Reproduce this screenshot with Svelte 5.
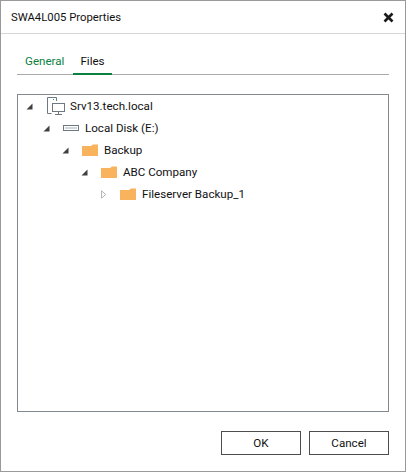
<script>
	const nodes = [
		{ label: 'Srv13.tech.local', depth: 0, icon: 'server', arrow: 'open' },
		{ label: 'Local Disk (E:)', depth: 1, icon: 'disk', arrow: 'open' },
		{ label: 'Backup', depth: 2, icon: 'folder', arrow: 'open' },
		{ label: 'ABC Company', depth: 3, icon: 'folder', arrow: 'open' },
		{ label: 'Fileserver Backup_1', depth: 4, icon: 'folder', arrow: 'closed' }
	];
</script>

<div class="window">
	<header>
		<span class="title">SWA4L005 Properties</span>
		<svg class="close" width="11" height="11" viewBox="0 0 11 11">
			<path d="M1.5 1.5 L9.5 9.5 M9.5 1.5 L1.5 9.5" stroke="#1a1a1a" stroke-width="2.6" />
		</svg>
	</header>

	<main>
		<nav>
			<span class="tab">General</span>
			<span class="tab active">Files</span>
		</nav>

		<div class="tree">
			{#each nodes as node}
				<div class="row" style="padding-left: {node.depth ? node.depth * 19 + 6 : 8}px">
					{#if node.arrow === 'open'}
						<svg class="arrow" width="7" height="7" viewBox="0 0 7 7">
							<path d="M6.5 0.5 V6.5 H0.5 Z" fill="#404040" />
						</svg>
					{:else}
						<svg class="arrow" width="7" height="9" viewBox="0 0 7 9">
							<path d="M1.5 0.8 L5.8 4.5 L1.5 8.2 Z" fill="#fff" stroke="#b5b5b5" />
						</svg>
					{/if}

					{#if node.icon === 'server'}
						<svg class="icon server" width="19" height="20" viewBox="0 0 19 20" fill="none">
							<path d="M10.5 1.5 H1.5 V17.5 H5.5" stroke="#6d7880" />
							<path d="M10.5 1.5 V5" stroke="#6d7880" />
							<rect x="7" y="3" width="1" height="1" fill="#1f9d6b" />
							<rect x="6.5" y="7.5" width="12" height="8" fill="#fff" stroke="#6d7880" />
							<path d="M12.5 16 V18 M9 18.5 H16" stroke="#6d7880" />
						</svg>
					{:else if node.icon === 'disk'}
						<svg class="icon" width="16" height="20" viewBox="0 0 16 20" fill="none">
							<rect x="0.5" y="7.5" width="15" height="5" fill="#fff" stroke="#6d7880" />
							<path d="M2 10 H14" stroke="#a5adb3" />
						</svg>
					{:else}
						<svg class="icon" width="16" height="20" viewBox="0 0 16 20">
							<path d="M0 6 H9 L11 4.5 H16 V16 H0 Z" fill="#f8b35c" />
						</svg>
					{/if}

					<span class="label">{node.label}</span>
				</div>
			{/each}
		</div>
	</main>

	<footer>
		<button>OK</button>
		<button>Cancel</button>
	</footer>
</div>

<style>
	:global(body) {
		background: #fff;
	}
	.window {
		box-sizing: border-box;
		width: 406px;
		height: 472px;
		border: 1px solid #999;
		display: flex;
		flex-direction: column;
		font-family: Roboto, 'Open Sans', sans-serif;
		font-size: 11.6px;
		color: #111;
	}
	header {
		height: 32px;
		border-bottom: 1px solid #d6d6d6;
		display: flex;
		align-items: center;
		justify-content: space-between;
		padding: 0 11px 0 10px;
		flex-shrink: 0;
	}
	.title {
		font-size: 11.3px;
	}
	main {
		flex: 1;
		display: flex;
		flex-direction: column;
		padding: 17px 16px 0 16px;
	}
	nav {
		display: flex;
		height: 23px;
		border-bottom: 1px solid #aaa;
	}
	.tab {
		width: 39px;
		padding-left: 8px;
		line-height: 20px;
		color: #0b8040;
	}
	.tab.active {
		color: #111;
		padding: 0;
		text-align: center;
		height: 22px;
		border-bottom: 2px solid #0b8040;
		margin-left: 9px;
	}
	.tree {
		box-sizing: border-box;
		height: 318px;
		margin-top: 19px;
		border: 1px solid #82898f;
	}
	.row {
		height: 22px;
		display: flex;
		align-items: center;
	}
	.arrow {
		flex-shrink: 0;
		margin-right: 13px;
	}
	.icon {
		flex-shrink: 0;
		margin-right: 6px;
	}
	.icon.server {
		margin-right: 5px;
	}
	footer {
		display: flex;
		justify-content: flex-end;
		gap: 8px;
		padding: 0 16px 16px 0;
	}
	button {
		width: 80px;
		height: 24px;
		background: #fff;
		border: 1px solid #4d4d4d;
		border-radius: 0;
		padding: 0;
		font: inherit;
		color: #111;
	}
</style>
